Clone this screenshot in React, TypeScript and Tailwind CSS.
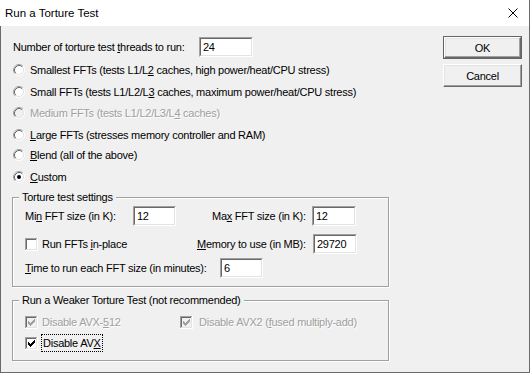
import React from 'react'

const Radio = ({ checked = false, disabled = false }: { checked?: boolean; disabled?: boolean }) => (
  <svg width="12" height="12" viewBox="0 0 12 12" className="shrink-0">
    <circle cx="6" cy="6" r="4.5" fill={disabled ? '#f0f0f0' : '#fff'} />
    <path d="M2.11 9.89A5.5 5.5 0 0 1 9.89 2.11" fill="none" stroke="#a0a0a0" />
    <path d="M9.89 2.11A5.5 5.5 0 0 1 2.11 9.89" fill="none" stroke="#fff" />
    <path d="M2.82 9.18A4.5 4.5 0 0 1 9.18 2.82" fill="none" stroke="#696969" />
    <path d="M9.18 2.82A4.5 4.5 0 0 1 2.82 9.18" fill="none" stroke="#e3e3e3" />
    {checked && <circle cx="6" cy="6" r="2" fill="#000" />}
  </svg>
)

const Check = ({ checked = false, disabled = false }: { checked?: boolean; disabled?: boolean }) => (
  <svg width="13" height="13" viewBox="0 0 13 13" shapeRendering="crispEdges" className="shrink-0">
    <path d="M0 0h12v1H1v11H0z" fill="#a0a0a0" />
    <path d="M12 0h1v13H0v-1h12z" fill="#fff" />
    <path d="M1 1h10v1H2v9H1z" fill="#696969" />
    <path d="M11 1h1v11H1v-1h10z" fill="#e3e3e3" />
    <rect x="2" y="2" width="9" height="9" fill={disabled ? '#f0f0f0' : '#fff'} />
    {checked && (
      <path
        transform="translate(3 3)"
        d="M6 0h1v1h-1z M5 1h2v1h-2z M0 2h1v1h-1z M4 2h3v1h-3z M0 3h2v1h-2z M3 3h3v1h-3z M0 4h5v1h-5z M1 5h3v1h-3z M2 6h1v1h-1z"
        fill={disabled ? '#a0a0a0' : '#000'}
      />
    )}
  </svg>
)

const Field = ({ value, className }: { value: string; className: string }) => (
  <div className={`h-[20px] shrink-0 border border-t-[#a0a0a0] border-l-[#a0a0a0] border-r-white border-b-white ${className}`}>
    <div className="flex h-full items-center border border-t-[#696969] border-l-[#696969] border-r-[#e3e3e3] border-b-[#e3e3e3] bg-white pl-[2px]">
      {value}
    </div>
  </div>
)

const U = ({ children }: { children: React.ReactNode }) => <span className="underline">{children}</span>

const dim = 'text-[#a0a0a0] [text-shadow:1px_1px_0_#fff]'

const Group = ({ title, children }: { title: string; children: React.ReactNode }) => (
  <fieldset className="w-[377px] border border-[#a0a0a0] shadow-[1px_1px_0_#fff,inset_1px_1px_0_#fff]">
    <legend className="ml-[6px] bg-[#f0f0f0] px-[3px]">{title}</legend>
    {children}
  </fieldset>
)

const Button = ({ label, primary = false }: { label: string; primary?: boolean }) => (
  <div className={`h-[23px] w-[79px] ${primary ? 'border border-[#646464]' : ''}`}>
    <div className="flex h-full items-center justify-center border border-t-white border-l-white border-r-[#696969] border-b-[#696969] shadow-[inset_-1px_-1px_0_#a0a0a0,inset_1px_1px_0_#e3e3e3]">
      {label}
    </div>
  </div>
)

export default function App() {
  return (
    <div className="flex h-[373px] w-[530px] flex-col font-['Liberation_Sans',Arial,sans-serif] text-[11px] leading-[14px] tracking-[-0.25px] text-black">
      <div className="flex h-[26px] shrink-0 items-center justify-between border-r border-[#6a6a6a] bg-white pl-[5px] pr-[11px] text-[11.5px] tracking-normal">
        <span>Run a Torture Test</span>
        <svg width="10" height="10" viewBox="0 0 10 10">
          <path d="M0.5 0.5L9.5 9.5M9.5 0.5L0.5 9.5" stroke="#000" strokeWidth="1" />
        </svg>
      </div>

      <div className="flex flex-1 border border-t-0 border-[#6a6a6a] bg-[#f0f0f0]">
        <div className="flex w-[388px] flex-col pl-[11px] pt-[11px]">
          <div className="flex h-[20px] items-center pl-[1px]">
            <span className="w-[186px]">
              Number of torture test <U>t</U>hreads to run:
            </span>
            <Field value="24" className="w-[54px]" />
          </div>

          <div className="mt-[3px] flex h-[20px] items-center gap-[5px] pl-[1px]">
            <Radio />
            <span>
              Smallest FFTs (tests L1/L<U>2</U> caches, high power/heat/CPU stress)
            </span>
          </div>
          <div className="mt-[2px] flex h-[20px] items-center gap-[5px] pl-[1px]">
            <Radio />
            <span>
              Small FFTs (tests L1/L2/L<U>3</U> caches, maximum power/heat/CPU stress)
            </span>
          </div>
          <div className="mt-[1px] flex h-[20px] items-center gap-[5px] pl-[1px]">
            <Radio disabled />
            <span className={dim}>
              Medium FFTs (tests L1/L2/L3/L<U>4</U> caches)
            </span>
          </div>
          <div className="mt-[2px] flex h-[20px] items-center gap-[5px] pl-[1px]">
            <Radio />
            <span>
              <U>L</U>arge FFTs (stresses memory controller and RAM)
            </span>
          </div>
          <div className="flex h-[20px] items-center gap-[5px] pl-[1px]">
            <Radio />
            <span>
              <U>B</U>lend (all of the above)
            </span>
          </div>
          <div className="mt-[2px] flex h-[20px] items-center gap-[5px] pl-[1px]">
            <Radio checked />
            <span>
              <U>C</U>ustom
            </span>
          </div>

          <div className="mt-[3px]">
            <Group title="Torture test settings">
              <div className="flex flex-col pb-[8px] pl-[12px] pt-[2px]">
                <div className="flex h-[20px] items-center">
                  <span className="w-[108px]">
                    Mi<U>n</U> FFT size (in K):
                  </span>
                  <Field value="12" className="w-[43px]" />
                  <span className="ml-[36px] w-[100px]">
                    Ma<U>x</U> FFT size (in K):
                  </span>
                  <Field value="12" className="w-[44px]" />
                </div>
                <div className="mt-[8px] flex h-[20px] items-center">
                  <div className="flex w-[172px] items-center gap-[4px]">
                    <Check />
                    <span>
                      Run FFTs <U>i</U>n-place
                    </span>
                  </div>
                  <span className="w-[116px]">
                    <U>M</U>emory to use (in MB):
                  </span>
                  <Field value="29720" className="w-[44px]" />
                </div>
                <div className="mt-[4px] flex h-[20px] items-center">
                  <span className="w-[195px]">
                    <U>T</U>ime to run each FFT size (in minutes):
                  </span>
                  <Field value="6" className="w-[43px]" />
                </div>
              </div>
            </Group>
          </div>

          <div className="mt-[6px]">
            <Group title="Run a Weaker Torture Test (not recommended)">
              <div className="flex flex-col pb-[8px] pl-[12px] pt-[6px]">
                <div className="flex h-[18px] items-center">
                  <div className="flex w-[155px] items-center gap-[4px]">
                    <Check checked disabled />
                    <span className={dim}>
                      Disable AVX-<U>5</U>12
                    </span>
                  </div>
                  <div className="flex items-center gap-[6px]">
                    <Check checked disabled />
                    <span className={dim}>
                      Disable AVX2 (<U>f</U>used multiply-add)
                    </span>
                  </div>
                </div>
                <div className="mt-[3px] flex h-[18px] items-center gap-[3px]">
                  <Check checked />
                  <span className="flex h-[18px] items-center border border-dotted border-black px-[1px]">
                    Disable AV<U>X</U>
                  </span>
                </div>
              </div>
            </Group>
          </div>
        </div>

        <div className="ml-[54px] flex flex-col gap-[5px] pt-[10px]">
          <Button label="OK" primary />
          <Button label="Cancel" />
        </div>
      </div>
    </div>
  )
}
